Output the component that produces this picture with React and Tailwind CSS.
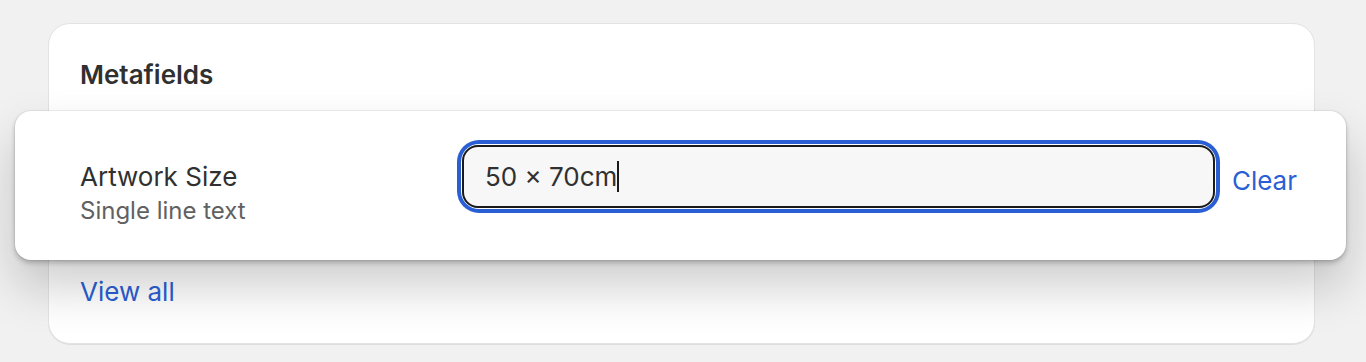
export default function App() {
  return (
    <div className="min-h-[362px] w-full bg-[#f1f1f1] pt-[23px] pl-[48px] pr-[51px] font-['Inter',sans-serif] antialiased">
      {/* Card */}
      <div className="rounded-[22px] border border-[#e3e3e3] bg-white px-[31px] pt-[35px] pb-[35px] shadow-[0_1px_0_rgba(0,0,0,0.08)]">
        <h2 className="text-[26px] leading-[32px] font-semibold text-[#303030]">Metafields</h2>

        {/* Lifted row */}
        <div className="relative z-10 mt-[20px] -ml-[65px] -mr-[63px] flex h-[149px] items-start rounded-[16px] bg-white pt-[34px] pl-[65px] pr-[49px] shadow-[0_0_0_1px_rgba(0,0,0,0.05),0_3px_5px_rgba(0,0,0,0.22),0_26px_50px_rgba(0,0,0,0.2)]">
          <div className="mt-[15px] w-[382px] shrink-0">
            <div className="text-[26px] leading-[34px] text-[#303030]">Artwork Size</div>
            <div className="text-[24px] leading-[34px] text-[#616161]">Single line text</div>
          </div>

          <div className="flex-1 rounded-[17px] ring-[4px] ring-[#2a5fd4] ring-offset-[1px] ring-offset-white">
            <div className="flex h-[63px] items-center rounded-[16px] border-2 border-[#1a1a1a] bg-[#f7f7f7] pl-[21px]">
              <span className="text-[26px] leading-[32px] text-[#303030]">50 × 70cm</span>
              <span className="h-[31px] w-[2px] bg-[#1a1a1a]" />
            </div>
          </div>

          <a href="#" className="ml-[17px] mt-[20px] text-[26px] leading-[32px] text-[#2a5fd4]">
            Clear
          </a>
        </div>

        <a href="#" className="mt-[16px] block text-[26px] leading-[32px] text-[#2a5fd4]">
          View all
        </a>
      </div>
    </div>
  );
}
